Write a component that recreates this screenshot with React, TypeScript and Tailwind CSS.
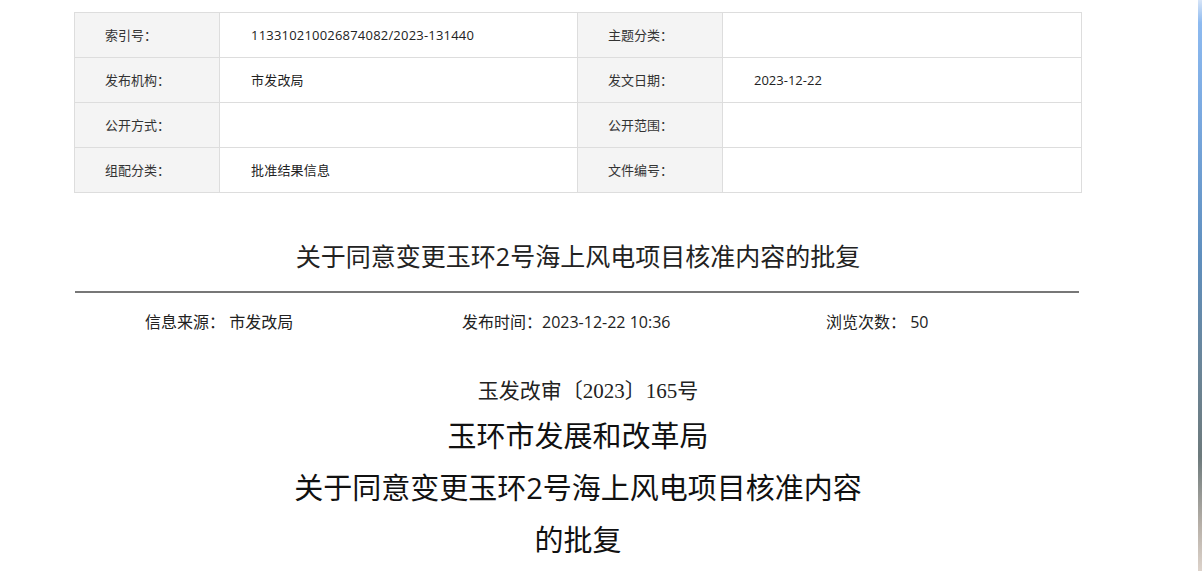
const rows = [
  ['索引号：', '113310210026874082/2023-131440', '主题分类：', ''],
  ['发布机构：', '市发改局', '发文日期：', '2023-12-22'],
  ['公开方式：', '', '公开范围：', ''],
  ['组配分类：', '批准结果信息', '文件编号：', ''],
];

const sans = "font-['Open_Sans','Noto_Sans_CJK_SC',sans-serif]";

export default function App() {
  return (
    <div className="flex w-[1202px] h-[571px] overflow-hidden bg-white">
      <div className={`w-[1198px] ${sans} text-[#333]`}>
        <div className="ml-[74px] w-[1008px] pt-[12px]">
          <table className="w-full border-collapse border border-[#dddddd] text-[13px] table-fixed">
            <colgroup>
              <col className="w-[145px]" />
              <col className="w-[358px]" />
              <col className="w-[145px]" />
              <col />
            </colgroup>
            <tbody>
              {rows.map((r, i) => (
                <tr key={i} className="h-[45px]">
                  <td className="border border-[#dddddd] bg-[#f4f4f4] pl-[30px] pt-[2px]">{r[0]}</td>
                  <td className="border border-[#dddddd] pl-[31px] pt-[2px] text-[#222] tracking-[0.2px]">{r[1]}</td>
                  <td className="border border-[#dddddd] bg-[#f4f4f4] pl-[30px] pt-[2px]">{r[2]}</td>
                  <td className="border border-[#dddddd] pl-[31px] pt-[2px] text-[#222]">{r[3]}</td>
                </tr>
              ))}
            </tbody>
          </table>

          <h1 className="mt-[43px] text-center text-[25px] leading-[40px] text-[#222] font-normal">
            关于同意变更玉环2号海上风电项目核准内容的批复
          </h1>
          <div className="mt-[15px] mx-[1px] h-[2px] w-[1004px] bg-[#777777]" />

          <div className="mt-[17px] flex text-[16px] leading-[24px] text-[#222]">
            <span className="ml-[71px] w-[317px]">信息来源：&nbsp;市发改局</span>
            <span className="w-[364px]">发布时间：2023-12-22 10:36</span>
            <span>浏览次数：&nbsp;50</span>
          </div>

          <p className="mt-[42px] pl-[20px] text-center text-[21px] leading-[30px] text-[#222] font-['SimSun','Liberation_Serif','Noto_Sans_CJK_SC',serif]">
            玉发改审〔2023〕165号
          </p>
          <div className="mt-[4px] text-center text-[29px] leading-[52px] text-[#111]">
            <p>玉环市发展和改革局</p>
            <p>关于同意变更玉环2号海上风电项目核准内容</p>
            <p>的批复</p>
          </div>
        </div>
      </div>
      <div className="w-[4px] h-full bg-[linear-gradient(to_bottom,#d6e4f7_0%,#8dbaf0_4%,#7aa9e0_20%,#5f8fbe_45%,#6b8597_65%,#6d7a7c_80%,#b7b0a8_92%,#ddd3cb_100%)]" />
    </div>
  );
}
